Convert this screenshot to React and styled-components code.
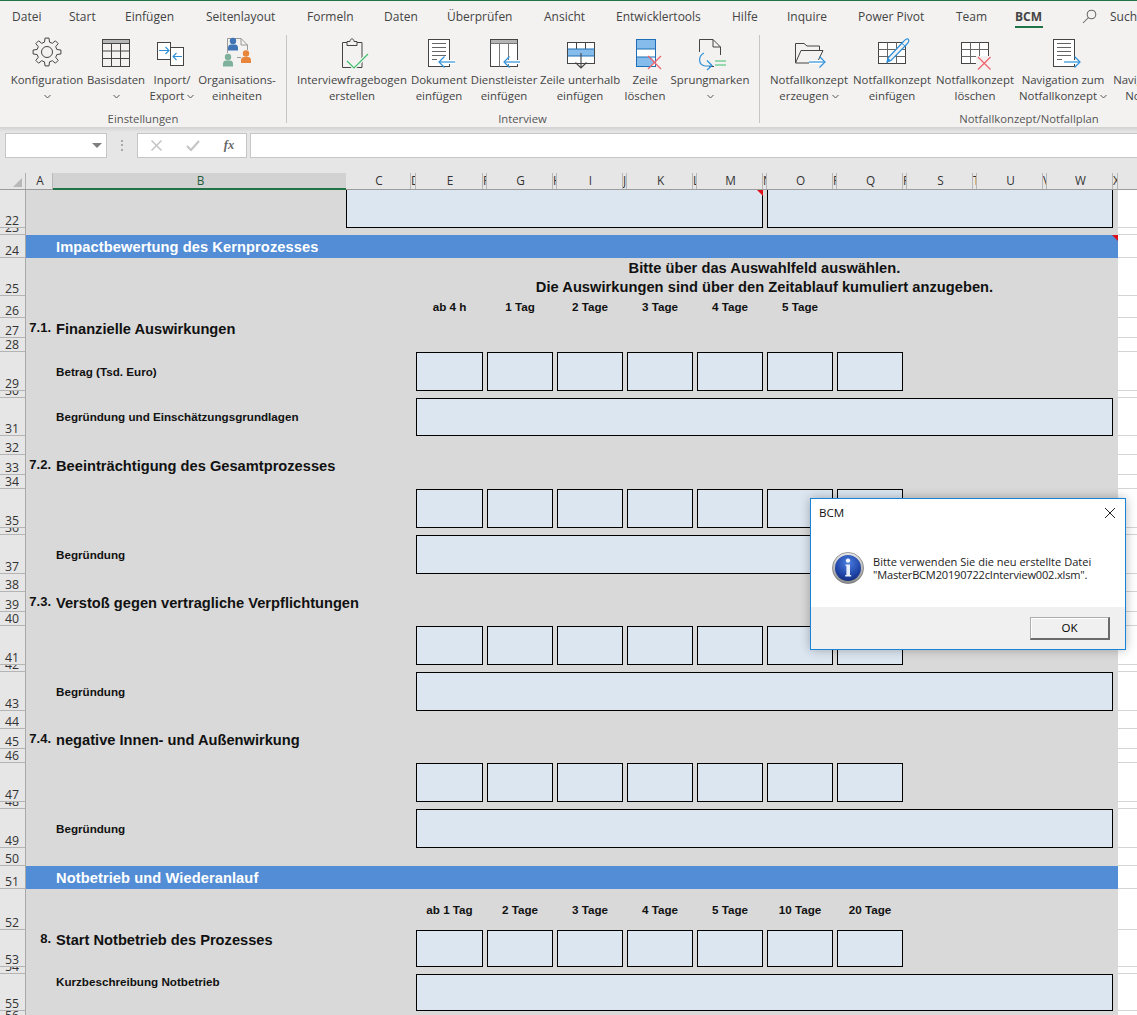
import React from "react";
import styled, { createGlobalStyle } from "styled-components";

const Global = createGlobalStyle`
  html, body { margin: 0; padding: 0; background: #e6e6e6; }
  * { box-sizing: border-box; }
`;
const UI = `"Open Sans", "Noto Sans", sans-serif`;
const CELL = `"Liberation Sans", Arial, sans-serif`;
const TRACKS = "30px 290px 65px 5px 67px 4px 66px 4px 66px 4px 66px 4px 66px 4px 66px 4px 66px 4px 66px 4px 66px 4px 66px 5px";

const Window = styled.div`
  width: 1137px; height: 1015px; overflow: hidden; position: relative;
  display: flex; flex-direction: column; font-family: ${UI};
  border-top: 1px solid #217346;
`;
/* ribbon */
const Ribbon = styled.header`
  height: 126px; background: #f3f2f1; display: flex; flex-direction: column; overflow: hidden; flex: none;
`;
const TabRow = styled.nav`
  height: 32px; display: flex; align-items: center; padding-left: 12px; flex: none;
`;
const Tab = styled.div`
  width: ${p => p.$w}px; flex: none; height: 32px; line-height: 31px; font-size: 12px; color: #444;
  white-space: nowrap; position: relative; font-weight: ${p => p.$active ? 700 : 400};
  ${p => p.$active && `&::after{content:"";position:absolute;left:0;width:28px;top:25px;height:2px;background:#217346;}`}
`;
const SearchSlot = styled.div`
  width: 28px; flex: none; display: flex; align-items: center; padding-bottom: 2px;
`;
const Groups = styled.div`
  display: flex; height: 94px; flex: none; padding-left: 6px;
`;
const Group = styled.section`
  width: ${p => p.$w}px; flex: none; display: flex; flex-direction: column;
`;
const Buttons = styled.div`
  display: flex; height: 78px; flex: none;
`;
const GroupName = styled.div`
  height: 16px; line-height: 16px; font-size: 11.3px; color: #555; white-space: nowrap;
  text-align: center; padding-left: ${p => p.$left || 0}px; padding-right: ${p => p.$right || 0}px;
`;
const Sep = styled.div`
  width: 1px; height: 88px; margin: 2px 5px 0 ${p => p.$ml || 0}px; background: #c6c6c6; flex: none;
`;
const RBtn = styled.div`
  width: ${p => p.$w}px; flex: none; display: flex; flex-direction: column; align-items: center;
`;
const IconSlot = styled.div`
  height: 39px; width: 40px; flex: none;
  svg { display: block; overflow: visible; }
`;
const RLine = styled.div`
  height: 16px; line-height: 16px; font-size: 11.4px; color: #444; white-space: nowrap;
  display: flex; align-items: center; gap: 3px;
`;
/* formula */
const FormulaBar = styled.div`
  height: 46px; flex: none; display: flex; align-items: center; padding: 0 0 10px 5px; gap: 0;
  background: linear-gradient(#d2d2d2 0, #e6e6e6 5px);
`;
const NameBox = styled.div`
  width: 102px; height: 25px; background: #fff; border: 1px solid #c6c6c6; display: flex; align-items: center; justify-content: flex-end; padding-right: 4px; flex: none;
`;
const Caret = styled.div`
  width: 0; height: 0; border-left: 5px solid transparent; border-right: 5px solid transparent; border-top: 5px solid #7f7f7f;
`;
const Dots = styled.div`
  width: 2px; height: 11px; margin: 0 14px; flex: none;
  background: repeating-linear-gradient(#a8a8a8 0 2px, transparent 2px 4.5px);
`;
const FxBox = styled.div`
  width: 110px; height: 25px; background: #fff; border: 1px solid #c6c6c6; flex: none; margin-right: 3px;
  display: grid; grid-template-columns: 37px 36px 36px; align-items: center; justify-items: center;
`;
const Fx = styled.span`
  font-family: "Liberation Serif", serif; font-style: italic; font-size: 12.5px; font-weight: 700; color: #666;
`;
const FormulaInput = styled.div`
  flex: 1; height: 25px; background: #fff; border: 1px solid #c6c6c6; border-right: 0;
`;
/* sheet */
const ColHeader = styled.div`
  height: 17px; flex: none; display: flex; background: #e6e6e6; border-bottom: 1px solid #9c9c9c;
`;
const Corner = styled.div`
  width: 26px; flex: none; border-right: 1px solid #b0b0b0; position: relative;
  &::after { content: ""; position: absolute; right: 3px; bottom: 2px; width: 9px; height: 9px; background: #b8b8b8; clip-path: polygon(100% 0, 100% 100%, 0 100%); }
`;
const ColCell = styled.div`
  width: ${p => p.$w}px; flex: none; text-align: center; font-size: 11.8px; line-height: 15px; color: #333; padding-left: ${p => p.$w > 10 ? 2 : 0}px;
  overflow: hidden; border-right: 1px solid #b8b8b8; white-space: nowrap; position: relative;
  ${p => p.$sel && `background:#d2d2d2; height:17px; border-bottom:2px solid #217346; border-right:0; color:#1f5c3a;`}
`;
const Rows = styled.div` display: flex; flex-direction: column; flex: none; `;
const Row = styled.div`
  height: ${p => p.$h}px; display: flex; flex: none; position: relative;
`;
const RowHead = styled.div`
  width: 26px; flex: none; background: #e6e6e6; border-right: 1px solid #a8a8a8; border-bottom: 1px solid #b4b4b4;
  overflow: hidden; display: flex; align-items: flex-end; justify-content: center; color: #333;
  font-size: 12.3px; line-height: 12px;
  span { display: block; padding-right: 1px; }
`;
const Grid = styled.div`
  width: 1092px; flex: none; display: grid; grid-template-columns: ${TRACKS}; grid-template-rows: 100%;
  background: ${p => p.$blue ? "#538dd5" : "#d9d9d9"}; font-family: ${CELL}; color: #111;
`;
const Tail = styled.div`
  flex: 1; background: #fff; border-bottom: 1px solid #d4d4d4;
`;
const InputBox = styled.div`
  grid-column: ${p => p.$from} / ${p => p.$to}; background: #dce6f1; border: 1px solid #000; ${p => p.$open && "border-top: 0;"}
`;
const SectionTitle = styled.div`
  grid-column: 2 / 24; color: #fff; font-weight: 700; font-size: 14.67px; letter-spacing: .08px; line-height: 24px; white-space: nowrap;
`;
const ItemNum = styled.div`
  grid-column: 1; font-weight: 700; font-size: 13px; text-align: right; padding: ${p => p.$top ?? 0}px 5px 0 0; align-self: ${p => p.$top !== undefined ? "start" : "center"}; white-space: nowrap; line-height: 16px;
`;
const ItemTitle = styled.div`
  grid-column: 2 / 4; font-weight: 700; font-size: 14.67px; align-self: ${p => p.$top !== undefined ? "start" : "center"}; padding-top: ${p => p.$top ?? 2}px; white-space: nowrap; line-height: 16px;
`;
const SubLabel = styled.div`
  grid-column: 2 / 4; font-weight: 700; font-size: 11.65px; align-self: ${p => p.$top !== undefined ? "start" : "center"}; padding-top: ${p => p.$top || 0}px; white-space: nowrap; line-height: 14px;
`;
const DayHead = styled.div`
  grid-column: ${p => p.$from} / ${p => p.$from + 1}; font-weight: 700; font-size: 11.65px; text-align: center; align-self: center; white-space: nowrap; line-height: 14px;
`;
const Notice = styled.div`
  grid-column: 5 / 24; text-align: center; font-weight: 700; font-size: 14.67px; letter-spacing: .03px; line-height: 19px; align-self: end; white-space: nowrap; margin-bottom: -1px;
`;
const CommentMark = styled.div`
  position: absolute; left: ${p => p.$x}px; top: 0; width: 0; height: 0;
  border-top: 6px solid #e0101a; border-left: 6px solid transparent;
`;
/* dialog */
const Dialog = styled.div`
  position: absolute; left: 810px; top: 497px; width: 316px; height: 152px; background: #fff; border: 1px solid #1883d7;
  box-shadow: 0 0 10px rgba(0,0,0,.28); display: flex; flex-direction: column; font-family: ${UI}; color: #111;
`;
const DlgTitle = styled.div`
  height: 29px; flex: none; display: flex; align-items: center; justify-content: space-between; padding: 0 9px 2px 8px; font-size: 11.6px;
`;
const DlgBody = styled.div`
  flex: 1; display: flex; align-items: center; padding: 0 0 0 21px; gap: 9px;
`;
const DlgText = styled.div`
  font-size: 11.05px; line-height: 13px; white-space: nowrap; color: #222;
`;
const DlgLine = styled.div`
  letter-spacing: ${p => p.$track || 0}px;
`;
const DlgFoot = styled.div`
  height: 42px; flex: none; background: #f0f0f0; display: flex; justify-content: flex-end; align-items: center; padding: 0 15px 0 0;
`;
const OkBtn = styled.div`
  width: 80px; height: 23px; background: #f0f0f0; border: 1px solid #adadad; border-right: 2px solid #6a6a6a; border-bottom: 2px solid #6a6a6a;
  box-shadow: inset 1px 1px 0 #fff; font-size: 11.5px; color: #000; display: flex; align-items: center; justify-content: center;
`;

/* ---------- icons ---------- */
const INK = "#444", BLUE = "#2e90d9", RED = "#f0646e", GREEN = "#3dbf6e";
const Ic = ({ children }) => <svg width="40" height="40" viewBox="0 0 40 40" fill="none" stroke={INK} strokeWidth="1">{children}</svg>;
const Arrow = ({ x1, x2, y, c = BLUE }) => {
  const d = x2 > x1 ? -1 : 1;
  return <g stroke={c} strokeWidth="1.2" fill="none">
    <path d={`M${x1} ${y}H${x2}`} stroke="#fff" strokeWidth="4" />
    <path d={`M${x1} ${y}H${x2}`} />
    <path d={`M${x2 + d * 5.5} ${y - 5.5}L${x2} ${y}L${x2 + d * 5.5} ${y + 5.5}`} />
  </g>;
};
const Cross = ({ x, y, s }) => <path d={`M${x} ${y}L${x + s} ${y + s}M${x + s} ${y}L${x} ${y + s}`} stroke={RED} strokeWidth="1.3" />;
const gearPath = () => {
  const pts = [];
  const cx = 20, cy = 19, n = 8;
  for (let i = 0; i < n; i++) {
    const a = (i / n) * Math.PI * 2 - Math.PI / 2;
    const w = Math.PI / n;
    [[-0.62, 10.2], [-0.36, 14], [0.36, 14], [0.62, 10.2]].forEach(([k, r]) => {
      pts.push(`${(cx + r * Math.cos(a + k * w)).toFixed(1)} ${(cy + r * Math.sin(a + k * w)).toFixed(1)}`);
    });
  }
  return "M" + pts.join("L") + "Z";
};
const GearIcon = () => <Ic><path d={gearPath()} strokeLinejoin="round" /><circle cx="20" cy="19" r="5.5" /></Ic>;
const TableIcon = () => <Ic>
  <rect x="6.5" y="6.5" width="27" height="4" fill="#b5b5b5" stroke="none" />
  <rect x="6.5" y="6.5" width="27" height="27" />
  <path d="M6.5 10.5H33.5M6.5 18H33.5M6.5 25.5H33.5M15.5 10.5V33.5M24.5 10.5V33.5" />
</Ic>;
const SwapIcon = () => <Ic>
  <rect x="5.5" y="9.5" width="13" height="17" fill="#fff" />
  <rect x="18.5" y="14.5" width="13" height="18" fill="#fff" />
  <g stroke={BLUE} strokeWidth="1.1">
    <path d="M7 17.5H17M13.5 14L17 17.5L13.5 21" />
    <path d="M30 23.5H21M24.5 20L21 23.5L24.5 27" />
  </g>
</Ic>;
const Person = ({ x, y, c }) => <g fill={c} stroke="none">
  <circle cx={x} cy={y} r={3.2} />
  <path d={`M${x - 5} ${y + 9.5}v-2.5q0-3.5 3-3.5h4q3 0 3 3.5v2.5z`} />
</g>;
const OrgIcon = () => <Ic>
  <path d="M10.5 5.5H24L30.5 12V17M10.5 5.5V20M24 5.5V12H30.5M20 24.5H24" stroke="#999" />
  <Person x={16} y={8} c="#3f74b5" />
  <Person x={29} y={20.5} c="#e8853b" />
  <Person x={11} y={24} c="#7fb09c" />
</Ic>;
const ClipIcon = () => <Ic>
  <path d="M15 9.5H10.5V34.5H30V9.5H25" />
  <path d="M15 12.5V8.5H18C18 5 22 5 22 8.5H25V12.5Z" fill="#f3f2f1" />
  <path d="M15 28L22 35L36 21" stroke="#f3f2f1" strokeWidth="3.5" />
  <path d="M15 28L22 35L36 21" stroke={GREEN} strokeWidth="1.2" />
</Ic>;
const DocLines = () => <path d="M13 10.5H27M13 14.5H27M13 18.5H27M13 22.5H27M13 26.5H18" stroke="#666" />;
const DocInIcon = () => <Ic>
  <rect x="9.5" y="6.5" width="21" height="27" fill="#fff" />
  <DocLines />
  <Arrow x1={36} x2={20} y={29} />
</Ic>;
const ColsIcon = () => <Ic>
  <rect x="6.5" y="6.5" width="27" height="27" fill="#fff" />
  <rect x="6.5" y="6.5" width="27" height="4" fill="#b5b5b5" stroke="none" />
  <rect x="6.5" y="6.5" width="27" height="27" />
  <path d="M6.5 10.5H33.5M15.5 10.5V33.5M24.5 10.5V33.5" stroke="#777" />
  <Arrow x1={36} x2={20} y={29} />
</Ic>;
const RowBelowIcon = () => <Ic>
  <rect x="7.5" y="9.5" width="27" height="21" fill="#fff" />
  <path d="M16.5 9.5V16M25.5 9.5V16" />
  <rect x="8" y="16" width="26" height="7" fill="#85bcec" stroke="none" />
  <path d="M7.5 16H34.5M7.5 23H34.5" stroke="#1e6fb5" />
  <path d="M21 20V35M15.5 29.5L21 35L26.5 29.5" stroke="#444" fill="none" strokeWidth="1.1" />
</Ic>;
const RowDelIcon = () => <Ic>
  <rect x="11.5" y="6.5" width="19" height="27" fill="#fff" stroke="#1e6fb5" />
  <rect x="12" y="7" width="18" height="9" fill="#85bcec" stroke="none" />
  <path d="M12 24H26L30 28.5L26 33.5H12Z" fill="#85bcec" stroke="none" />
  <path d="M11.5 16H30.5M11.5 24H30.5" stroke="#1e6fb5" strokeWidth="1.1" />
  <rect x="11.5" y="6.5" width="19" height="27" stroke="#1e6fb5" />
  <Cross x={23} y={23} s={13} />
</Ic>;
const MarkIcon = () => <Ic>
  <path d="M9.5 6.5H23L30.5 14V22M23 6.5V14H30.5M9.5 6.5V19M19 33.5H24" />
  <path d="M14 20C8 23 8 32 15 33H21" stroke={BLUE} strokeWidth="1.2" />
  <path d="M17 27.5L22 32.5L17 37" stroke={BLUE} strokeWidth="1.2" />
  <path d="M25 28H36M25 32H36" stroke={GREEN} strokeWidth="1.2" />
</Ic>;
const FolderIcon = () => <Ic>
  <path d="M6.5 30V10.5H15L18 13H30.5V17" />
  <path d="M6.5 30H28L34 17.5H12Z" fill="#f3f2f1" />
  <Arrow x1={20} x2={36} y={29} />
</Ic>;
const GridCells = () => <>
  <rect x="6.5" y="9.5" width="27" height="21" fill="#fff" />
  <path d="M6.5 16.5H33.5M6.5 23.5H33.5M15.5 9.5V30.5M24.5 9.5V30.5" stroke="#666" />
</>;
const PenIcon = () => <Ic>
  <GridCells />
  <path d="M16 25L31.5 8.5C33 6.5 35.5 5 36.5 6.5C37.5 8 36 10 34.5 11.5L19 27.5L15 29Z" fill="#f3f2f1" stroke={BLUE} strokeWidth="1.2" />
  <path d="M16 25L19 27.5L15 29Z" fill={BLUE} stroke="none" />
  <path d="M30 10.5L33.5 13.5" stroke={BLUE} />
</Ic>;
const GridDelIcon = () => <Ic>
  <GridCells />
  <rect x="21" y="23" width="14" height="9" fill="#f3f2f1" stroke="none" />
  <Cross x={23} y={24} s={12.5} />
</Ic>;
const DocOutIcon = () => <Ic>
  <rect x="10.5" y="6.5" width="21" height="27" fill="#fff" />
  <path d="M14 10.5H28M14 14.5H28M14 18.5H28M14 22.5H28M14 26.5H19" stroke="#666" />
  <Arrow x1={21} x2={37} y={29} />
</Ic>;
const Chevron = () => <svg width="7" height="5" viewBox="0 0 7 5" fill="none" stroke="#555" strokeWidth="1"><path d="M.5 1L3.5 4L6.5 1" /></svg>;
const SearchIcon = () => <svg width="15" height="15" viewBox="0 0 15 15" fill="none" stroke="#666" strokeWidth="1.05"><circle cx="9.5" cy="5.5" r="4.3" /><path d="M6.5 8.5L1 14" /></svg>;
const InfoIcon = () => <svg width="32" height="32" viewBox="0 0 32 32" style={{ flex: "none" }}>
  <defs>
    <radialGradient id="infoB" cx="50%" cy="30%" r="70%"><stop offset="0" stopColor="#4c7fe0" /><stop offset=".7" stopColor="#1f45a8" /><stop offset="1" stopColor="#16307f" /></radialGradient>
    <linearGradient id="infoR" x1="0" y1="0" x2="0" y2="1"><stop offset="0" stopColor="#e8e8e8" /><stop offset="1" stopColor="#8c8c8c" /></linearGradient>
  </defs>
  <circle cx="16" cy="16" r="15.6" fill="url(#infoR)" stroke="#666" strokeWidth=".6" />
  <circle cx="16" cy="16" r="13" fill="url(#infoB)" />
  <circle cx="16" cy="8.6" r="2.2" fill="#f2f6ff" />
  <path d="M13.6 12.5H18V23H19.2V24.6H13.2V23H14.4V14H13.6Z" fill="#e9eefb" />
</svg>;

/* ---------- data ---------- */
const TABS = [["Datei", 57], ["Start", 56], ["Einfügen", 81], ["Seitenlayout", 101], ["Formeln", 77], ["Daten", 63], ["Überprüfen", 97], ["Ansicht", 72], ["Entwicklertools", 116], ["Hilfe", 55], ["Inquire", 71], ["Power Pivot", 98], ["Team", 59], ["BCM", 67]];
const G1 = [
  { w: 82, icon: <GearIcon />, lines: ["Konfiguration", ""], chev: 1 },
  { w: 56, icon: <TableIcon />, lines: ["Basisdaten", ""], chev: 1 },
  { w: 56, icon: <SwapIcon />, lines: ["Inport/", "Export"], chev: 1 },
  { w: 74, icon: <OrgIcon />, lines: ["Organisations-", "einheiten"] },
];
const G2 = [
  { w: 120, icon: <ClipIcon />, lines: ["Interviewfragebogen", "erstellen"] },
  { w: 54, icon: <DocInIcon />, lines: ["Dokument", "einfügen"] },
  { w: 76, icon: <ColsIcon />, lines: ["Dienstleister", "einfügen"] },
  { w: 76, icon: <RowBelowIcon />, lines: ["Zeile unterhalb", "einfügen"] },
  { w: 54, icon: <RowDelIcon />, lines: ["Zeile", "löschen"] },
  { w: 76, icon: <MarkIcon />, lines: ["Sprungmarken", ""], chev: 1 },
];
const G3 = [
  { w: 88, icon: <FolderIcon />, lines: ["Notfallkonzept", "erzeugen"], chev: 1 },
  { w: 78, icon: <PenIcon />, lines: ["Notfallkonzept", "einfügen"] },
  { w: 88, icon: <GridDelIcon />, lines: ["Notfallkonzept", "löschen"] },
  { w: 88, icon: <DocOutIcon />, lines: ["Navigation zum", "Notfallkonzept"], chev: 1 },
  { w: 95, icon: null, lines: ["Navigation zum", "Notfallplan"] },
];
const COLS = [["A", 27], ["B", 293, true], ["C", 65], ["D", 5], ["E", 67], ["F", 4], ["G", 66], ["H", 4], ["I", 66], ["J", 4], ["K", 66], ["L", 4], ["M", 66], ["N", 4], ["O", 66], ["P", 4], ["Q", 66], ["R", 4], ["S", 66], ["T", 4], ["U", 66], ["V", 4], ["W", 66], ["X", 5]];
const SEVEN = [5, 7, 9, 11, 13, 15, 17];
const Boxes = () => SEVEN.map(f => <InputBox key={f} $from={f} $to={f + 1} />);
const Wide = () => <InputBox $from={5} $to={24} />;
const R = ({ n, h, blue, children, mark }) => (
  <Row $h={h}>
    <RowHead><span>{n}</span></RowHead>
    <Grid $blue={blue}>{children}</Grid>
    <Tail />
    {mark && <CommentMark $x={mark} />}
  </Row>
);
const Impact = [
  [27, "7.1.", "Finanzielle Auswirkungen", "Betrag (Tsd. Euro)", "Begründung und Einschätzungsgrundlagen"],
  [33, "7.2.", "Beeinträchtigung des Gesamtprozesses", "", "Begründung"],
  [39, "7.3.", "Verstoß gegen vertragliche Verpflichtungen", "", "Begründung"],
  [45, "7.4.", "negative Innen- und Außenwirkung", "", "Begründung"],
];
const gapBefore = { 27: null, 33: 19, 39: 18, 45: 18 };

const RibbonButton = ({ b }) => (
  <RBtn $w={b.w}>
    <IconSlot>{b.icon}</IconSlot>
    <RLine>{b.lines[0]}</RLine>
    <RLine>{b.lines[1]}{b.chev && <Chevron />}</RLine>
  </RBtn>
);

export default function App() {
  return (
    <Window>
      <Global />
      <Ribbon>
        <TabRow>
          {TABS.map(([t, w]) => <Tab key={t} $w={w} $active={t === "BCM"}>{t}</Tab>)}
          <SearchSlot><SearchIcon /></SearchSlot>
          <Tab $w={40}>Suchen</Tab>
        </TabRow>
        <Groups>
          <Group $w={274}>
            <Buttons>{G1.map(b => <RibbonButton key={b.lines[0]} b={b} />)}</Buttons>
            <GroupName>Einstellungen</GroupName>
          </Group>
          <Sep $ml={6} />
          <Group $w={467}>
            <Buttons>{G2.map(b => <RibbonButton key={b.lines[0]} b={b} />)}</Buttons>
            <GroupName $right={6}>Interview</GroupName>
          </Group>
          <Sep $ml={0} />
          <Group $w={437}>
            <Buttons>{G3.map((b, i) => <RibbonButton key={i} b={b} />)}</Buttons>
            <GroupName $left={91}>Notfallkonzept/Notfallplan</GroupName>
          </Group>
        </Groups>
      </Ribbon>
      <FormulaBar>
        <NameBox><Caret /></NameBox>
        <Dots />
        <FxBox>
          <svg width="13" height="13" viewBox="0 0 13 13" stroke="#c4c4c4" strokeWidth="1.5"><path d="M1.5 1.5L11.5 11.5M11.5 1.5L1.5 11.5" /></svg>
          <svg width="14" height="13" viewBox="0 0 14 13" fill="none" stroke="#c4c4c4" strokeWidth="2"><path d="M1 7L5 11L13 2" /></svg>
          <Fx>fx</Fx>
        </FxBox>
        <FormulaInput />
      </FormulaBar>
      <ColHeader>
        <Corner />
        {COLS.map(([c, w, sel]) => <ColCell key={c} $w={w} $sel={sel}>{c}</ColCell>)}
      </ColHeader>
      <Rows>
        <R n={22} h={38} mark={757}><InputBox $from={3} $to={14} $open /><InputBox $from={15} $to={24} $open /></R>
        <R n={23} h={7} />
        <R n={24} h={23} blue mark={1112}><SectionTitle>Impactbewertung des Kernprozesses</SectionTitle></R>
        <R n={25} h={38}><Notice>Bitte über das Auswahlfeld auswählen.<br />Die Auswirkungen sind über den Zeitablauf kumuliert anzugeben.</Notice></R>
        <R n={26} h={22}>{["ab 4 h", "1 Tag", "2 Tage", "3 Tage", "4 Tage", "5 Tage"].map((d, i) => <DayHead key={d} $from={SEVEN[i]}>{d}</DayHead>)}</R>
        {Impact.map(([n, num, title, sub, reason]) => (
          <React.Fragment key={n}>
            {gapBefore[n] && <R n={n - 1} h={gapBefore[n]} />}
            <R n={n} h={20}><ItemNum>{num}</ItemNum><ItemTitle>{title}</ItemTitle></R>
            <R n={n + 1} h={14} />
            <R n={n + 2} h={39}>{sub && <SubLabel>{sub}</SubLabel>}<Boxes /></R>
            <R n={n + 3} h={7} />
            <R n={n + 4} h={n === 27 ? 38 : 39}><SubLabel>{reason}</SubLabel><Wide /></R>
          </React.Fragment>
        ))}
        <R n={50} h={18} />
        <R n={51} h={23} blue><SectionTitle>Notbetrieb und Wiederanlauf</SectionTitle></R>
        <R n={52} h={41}>{["ab 1 Tag", "2 Tage", "3 Tage", "4 Tage", "5 Tage", "10 Tage", "20 Tage"].map((d, i) => <DayHead key={d} $from={SEVEN[i]}>{d}</DayHead>)}</R>
        <R n={53} h={37}><ItemNum $top={1}>8.</ItemNum><ItemTitle $top={2}>Start Notbetrieb des Prozesses</ItemTitle><Boxes /></R>
        <R n={54} h={7} />
        <R n={55} h={37}><SubLabel $top={1}>Kurzbeschreibung Notbetrieb</SubLabel><Wide /></R>
        <R n={56} h={12} />
      </Rows>
      <Dialog>
        <DlgTitle>BCM
          <svg width="12" height="12" viewBox="0 0 12 12" stroke="#222" strokeWidth="1"><path d="M1 1L11 11M11 1L1 11" /></svg>
        </DlgTitle>
        <DlgBody>
          <InfoIcon />
          <DlgText>
            <DlgLine>Bitte verwenden Sie die neu erstellte Datei</DlgLine>
            <DlgLine $track={-0.18}>"MasterBCM20190722cInterview002.xlsm".</DlgLine>
          </DlgText>
        </DlgBody>
        <DlgFoot><OkBtn>OK</OkBtn></DlgFoot>
      </Dialog>
    </Window>
  );
}
